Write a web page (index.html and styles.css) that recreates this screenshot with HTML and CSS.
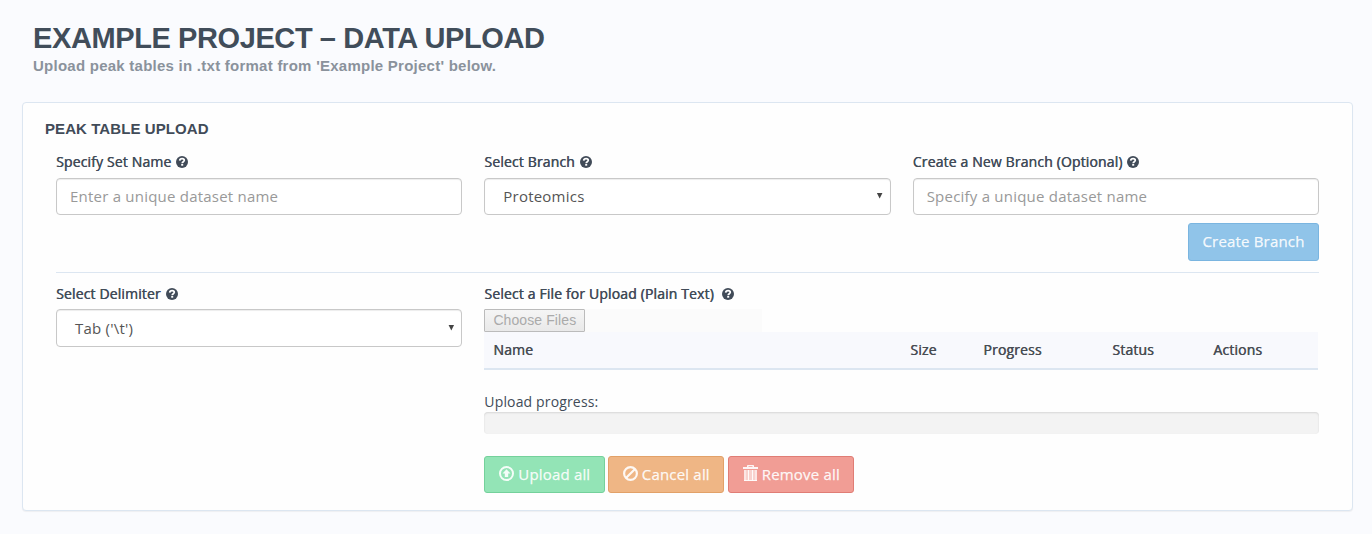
FILE: index.html
```html
<!DOCTYPE html>
<html lang="en">
<head>
<meta charset="utf-8">
<title>Example Project – Data Upload</title>
<link rel="stylesheet" href="styles.css">
</head>
<body>
<svg class="sprite" aria-hidden="true">
  <symbol id="help" viewBox="0 0 12 12">
    <circle cx="6" cy="6" r="6" fill="currentColor"/>
    <path d="M3.700 4.600C3.800 3.200 4.800 2.600 6.100 2.600c1.300 0 2.200.65 2.200 1.750C8.300 5.700 6.200 5.700 6.200 7.300" fill="none" stroke="#fff" stroke-width="1.700"/>
    <path d="M5.200 8h2v1.700h-2z" fill="#fff"/>
  </symbol>
  <symbol id="upload" viewBox="0 0 15 15">
    <circle cx="7.500" cy="7.500" r="6.500" fill="none" stroke="currentColor" stroke-width="2"/>
    <path d="M7.500 3.200 11.500 7.500H9.200v3.500H5.800V7.500H3.500z" fill="currentColor"/>
  </symbol>
  <symbol id="ban" viewBox="0 0 15 15">
    <circle cx="7.500" cy="7.500" r="6.400" fill="none" stroke="currentColor" stroke-width="2.200"/>
    <path d="M3.200 11.800 11.800 3.200" stroke="currentColor" stroke-width="2.200"/>
  </symbol>
  <symbol id="trash" viewBox="0 0 15 16">
    <path d="M0 2h4V.8Q4 0 4.800 0h5.400Q11 0 11 .8V2h4v2H0zM5.500 1.200V2h4v-.8z" fill="currentColor" fill-rule="evenodd"/>
    <path d="M1 5h13v10q0 1-1 1H2q-1 0-1-1z" fill="currentColor" opacity=".6"/>
    <path d="M2 5v10.500M5.500 5v10.500M9.500 5v10.500M13 5v10.500M1 15.500h13" stroke="currentColor"/>
  </symbol>
</svg>
<header class="page-head">
  <h1 class="page-title">EXAMPLE PROJECT – DATA UPLOAD</h1>
  <p class="page-sub">Upload peak tables in .txt format from 'Example Project' below.</p>
</header>
<main class="panel">
  <h2 class="panel-title">PEAK TABLE UPLOAD</h2>
  <section class="grid row-branch">
    <div class="field">
      <label class="label"><span class="lt">Specify Set Name</span><svg class="help"><use href="#help"/></svg></label>
      <input class="control" type="text" placeholder="Enter a unique dataset name">
    </div>
    <div class="field">
      <label class="label"><span class="lt">Select Branch</span><svg class="help"><use href="#help"/></svg></label>
      <div class="control select"><span>Proteomics</span><i class="arrow"></i></div>
    </div>
    <div class="field">
      <label class="label"><span class="lt">Create a New Branch (Optional)</span><svg class="help"><use href="#help"/></svg></label>
      <input class="control" type="text" placeholder="Specify a unique dataset name">
      <button class="btn create"><span>Create Branch</span></button>
    </div>
  </section>
  <section class="grid row-file">
    <div class="field">
      <label class="label"><span class="lt">Select Delimiter</span><svg class="help"><use href="#help"/></svg></label>
      <div class="control select tall"><span>Tab ('\t')</span><i class="arrow"></i></div>
    </div>
    <div class="field wide">
      <label class="label spaced"><span class="lt">Select a File for Upload (Plain Text)</span><svg class="help"><use href="#help"/></svg></label>
      <div class="file"><button class="choose">Choose Files</button></div>
      <div class="thead">
        <span class="lt">Name</span><span class="lt">Size</span><span class="lt">Progress</span><span class="lt">Status</span><span class="lt">Actions</span>
      </div>
      <p class="progress-label">Upload progress:</p>
      <div class="progress"></div>
      <div class="actions">
        <button class="btn upload"><svg class="ico"><use href="#upload"/></svg><span>Upload all</span></button>
        <button class="btn cancel"><svg class="ico"><use href="#ban"/></svg><span>Cancel all</span></button>
        <button class="btn remove"><svg class="ico trash"><use href="#trash"/></svg><span>Remove all</span></button>
      </div>
    </div>
  </section>
</main>
</body>
</html>
```
FILE: styles.css
```css
* { box-sizing: border-box; }
body {
  margin: 0;
  padding: 20px 19px 0 22px;
  height: 534px;
  background: #fafbfe;
  color: #414b58;
  font: 14px/20px "Open Sans", "Noto Sans", sans-serif;
}
h1, h2, p { margin: 0; }
.sprite { display: none; }
.page-head {
  height: 82px;
  padding-left: 11px;
  font-family: "Liberation Sans", Arial, sans-serif;
  font-weight: bold;
}
.page-title { font-size: 29px; line-height: 36px; letter-spacing: -.4px; white-space: nowrap; color: #414d5a; }
.page-sub { font-size: 15px; line-height: 20px; letter-spacing: .25px; color: #8a929c; }
.panel {
  height: 409px;
  padding: 15px 33px 0;
  background: #fefefe;
  border: 1px solid #dce6f1;
  border-radius: 4px;
  box-shadow: 0 1px 1px rgba(0, 0, 0, .05);
}
.panel-title {
  margin-left: -11px;
  font: bold 15px/22px "Liberation Sans", Arial, sans-serif;
  letter-spacing: .08px;
}
.grid { display: grid; grid-template-columns: repeat(3, 1fr); column-gap: 22px; }
.row-branch { height: 133px; padding-top: 12px; border-bottom: 1px solid #dce6f1; }
.row-file { padding-top: 11px; }
.wide { grid-column: span 2; }
.field { display: flex; flex-direction: column; min-width: 0; }
.label { display: flex; align-items: center; gap: 5px; height: 20px; margin-bottom: 6px; }
.row-file .label { margin-bottom: 5px; }
.spaced { gap: 8px; }
.lt { letter-spacing: .14px; text-shadow: .4px 0 0 currentColor; }
.help { width: 12px; height: 12px; }
.control {
  width: 100%;
  height: 37px;
  padding: 0 13px 2px;
  background: #fff;
  border: 1px solid #c8c8c8;
  border-radius: 4px;
  box-shadow: inset 0 1px 1px rgba(0, 0, 0, .075);
  color: #555;
  font: 15px/22px "Open Sans", "Noto Sans", sans-serif;
  letter-spacing: .22px;
}
.control::placeholder { color: #999; opacity: 1; }
.select { display: flex; align-items: center; justify-content: space-between; padding: 0 7px 1px 18px; }
.tall { height: 38px; padding-bottom: 0; }
.arrow { width: 6px; height: 6px; margin-top: -1px; background: #444; clip-path: polygon(0 0, 100% 0, 50% 100%); }
.btn {
  display: inline-flex;
  align-items: center;
  justify-content: center;
  gap: 4px;
  height: 37px;
  padding: 0 0 1px;
  border: 1px solid;
  border-radius: 3px;
  color: rgba(255, 255, 255, .9);
  font: 15px/22px "Open Sans", "Noto Sans", sans-serif;
  letter-spacing: .18px;
  white-space: nowrap;
}
.btn span { -webkit-text-stroke: .25px currentColor; }
.create { align-self: flex-end; width: 131px; height: 38px; margin-top: 8px; padding-bottom: 2px; background: #90c4e9; border-color: #7ab5e0; }
.file { width: 278px; height: 23px; background: #fbfbfb; }
.choose {
  display: block;
  width: 101px;
  height: 23px;
  padding: 0 0 1px;
  border: 1px solid #bbb;
  border-radius: 1px;
  background: linear-gradient(#f5f5f5, #e9e9e9);
  color: #aaa;
  font: 14px/20px "Liberation Sans", Arial, sans-serif;
  letter-spacing: .1px;
}
.thead {
  display: grid;
  grid-template-columns: 417px 73px 129px 101px 1fr;
  align-items: center;
  height: 38px;
  margin-right: 1px;
  padding-left: 9px;
  background: #f8f9fd;
  border-bottom: 2px solid #dce6f1;
  color: #474c53;
}
.progress-label { margin-top: 22px; letter-spacing: .15px; }
.progress {
  height: 22px;
  background: #f3f3f3;
  border-radius: 4px;
  box-shadow: inset 0 1px 2px rgba(0, 0, 0, .12);
}
.actions { display: flex; margin-top: 22px; }
.ico { width: 15px; height: 15px; margin-top: -1px; }
.trash { height: 16px; margin-top: -2px; }
.upload { width: 121px; margin-right: 3px; background: #93e4b6; border-color: #74d19b; }
.cancel { width: 116px; margin-right: 4px; background: #efb685; border-color: #e2a168; }
.remove { width: 126px; background: #f19d95; border-color: #e07d75; }
```
